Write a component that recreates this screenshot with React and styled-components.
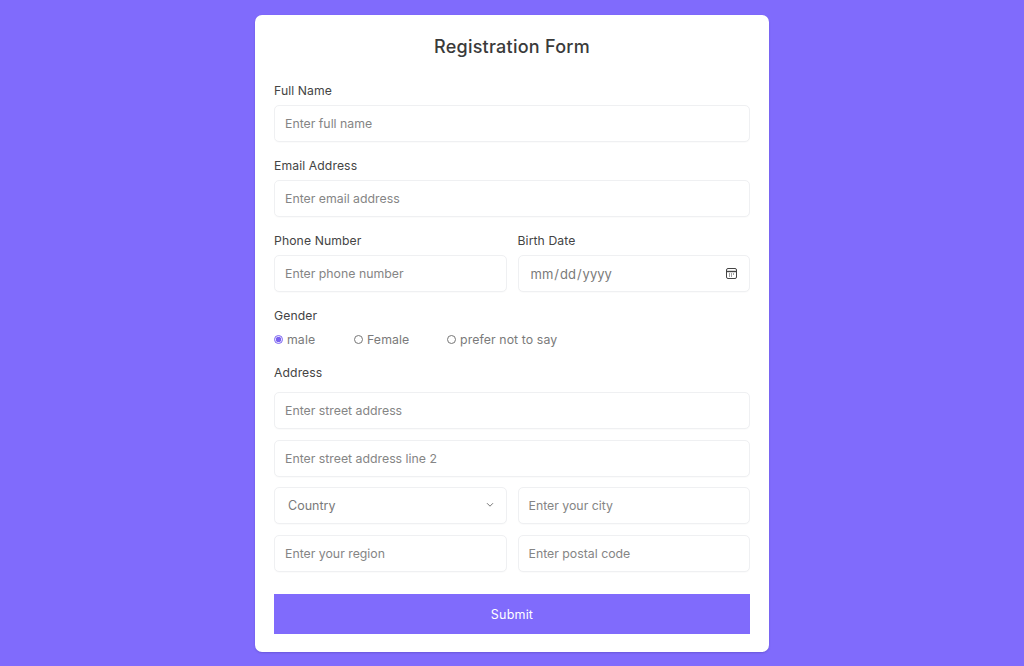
import React from 'react';
import styled, { createGlobalStyle } from 'styled-components';

const GlobalStyle = createGlobalStyle`
  * { box-sizing: border-box; }
  html, body { margin: 0; height: 100%; }
  body {
    background: #806bfc;
    font-family: Inter, "Open Sans", sans-serif;
    overflow: hidden;
  }
`

const Page = styled.div`
  display: flex;
  justify-content: center;
  padding-top: 15px;
`

const Card = styled.form`
  width: 514px;
  height: 637px;
  padding: 19px 19px 18px;
  background: #fff;
  border-radius: 7px;
  box-shadow: 0 1px 2px rgba(40, 30, 120, 0.25);
`

const Title = styled.h1`
  margin: 0 0 23px;
  height: 24px;
  font-size: 18px;
  line-height: 25px;
  font-weight: 500;
  letter-spacing: 0.25px;
  text-align: center;
  color: #3a3a3a;
`

const Field = styled.div`
  margin-bottom: ${p => p.$mb ?? 14}px;
`

const Row = styled.div`
  display: grid;
  grid-template-columns: 1fr 1fr;
  column-gap: 11px;
  margin-bottom: ${p => p.$mb || 0}px;
`

const Label = styled.label`
  display: block;
  height: 20px;
  margin-bottom: ${p => p.$mb ?? 4}px;
  font-size: 12.2px;
  line-height: 20px;
  letter-spacing: 0.1px;
  color: #444;
`

const inputStyles = `
  display: block;
  width: 100%;
  height: 37px;
  padding: 0 10px;
  border: 1px solid #eff0f2;
  border-radius: 5px;
  background: #fff;
  font-family: Inter, "Open Sans", sans-serif;
  font-size: 12.3px;
  color: #7a7a7a;
  outline: none;
  box-shadow: 0 1px 1px rgba(0, 0, 0, 0.02);
`

const Input = styled.input`
  ${inputStyles}
  &::placeholder { color: #858585; opacity: 1; }
`

const DateInput = styled.input`
  ${inputStyles}
  padding-left: 11px;
  font-size: 13px;
  &::-webkit-calendar-picker-indicator {
    opacity: 0;
  }
`

const DateBox = styled.div`
  position: relative;
`

const OverIcon = styled.svg`
  position: absolute;
  top: ${p => p.$top}px;
  right: ${p => p.$right}px;
  pointer-events: none;
`

const SelectBox = styled.div`
  position: relative;
`

const Select = styled.select`
  ${inputStyles}
  padding-left: 13px;
  appearance: none;
  font-size: 12.5px;
`

const Stack = styled.div`
  display: grid;
  row-gap: 10.7px;
  margin-bottom: 22px;
`

const Radios = styled.div`
  display: flex;
  height: 20px;
  align-items: center;
  margin-top: -1px;
`

const RadioLabel = styled.label`
  display: flex;
  align-items: center;
  width: ${p => p.$w}px;
  font-size: 12.3px;
  letter-spacing: 0.1px;
  color: #7a7a7a;
`

const Radio = styled.input`
  width: 9px;
  height: 9px;
  margin: 0 4px 0 0;
  accent-color: #7a62f0;
`

const Submit = styled.button`
  display: block;
  width: 100%;
  height: 40px;
  border: 0;
  background: #806bfc;
  color: #fff;
  font-family: Inter, "Open Sans", sans-serif;
  font-size: 12.5px;
  letter-spacing: 0.2px;
`

function Text({ label, placeholder }) {
  return (
    <div>
      <Label>{label}</Label>
      <Input type="text" placeholder={placeholder} />
    </div>
  )
}

export default function App() {
  return (
    <Page>
      <GlobalStyle />
      <Card onSubmit={e => e.preventDefault()}>
        <Title>Registration Form</Title>
        <Field><Text label="Full Name" placeholder="Enter full name" /></Field>
        <Field><Text label="Email Address" placeholder="Enter email address" /></Field>
        <Row $mb={14}>
          <Text label="Phone Number" placeholder="Enter phone number" />
          <div>
            <Label>Birth Date</Label>
            <DateBox>
              <DateInput type="date" />
              <OverIcon $top={12} $right={12} width="13" height="13" viewBox="0 0 13 13" fill="none" stroke="#444" strokeWidth="1">
                <rect x="1.5" y="1.5" width="10" height="10" rx="1.5" />
                <path d="M1.5 4.5h10" strokeWidth="1.4" />
                <path d="M4 7h1M6 7h1M8 7h1M4 9h1M6 9h1" />
              </OverIcon>
            </DateBox>
          </div>
        </Row>
        <Field $mb={14}>
          <Label>Gender</Label>
          <Radios>
            <RadioLabel $w={80}><Radio type="radio" name="gender" defaultChecked />male</RadioLabel>
            <RadioLabel $w={93}><Radio type="radio" name="gender" />Female</RadioLabel>
            <RadioLabel $w={120}><Radio type="radio" name="gender" />prefer not to say</RadioLabel>
          </Radios>
        </Field>
        <Label $mb={9}>Address</Label>
        <Stack>
          <Input type="text" placeholder="Enter street address" />
          <Input type="text" placeholder="Enter street address line 2" />
          <Row>
            <SelectBox>
              <Select defaultValue="">
                <option value="">Country</option>
              </Select>
              <OverIcon $top={15} $right={13} width="8" height="6" viewBox="0 0 8 6" fill="none" stroke="#777" strokeWidth="1">
                <path d="M1 1.2l3 3 3-3" />
              </OverIcon>
            </SelectBox>
            <Input type="text" placeholder="Enter your city" />
          </Row>
          <Row>
            <Input type="text" placeholder="Enter your region" />
            <Input type="text" placeholder="Enter postal code" />
          </Row>
        </Stack>
        <Submit type="submit">Submit</Submit>
      </Card>
    </Page>
  )
}
